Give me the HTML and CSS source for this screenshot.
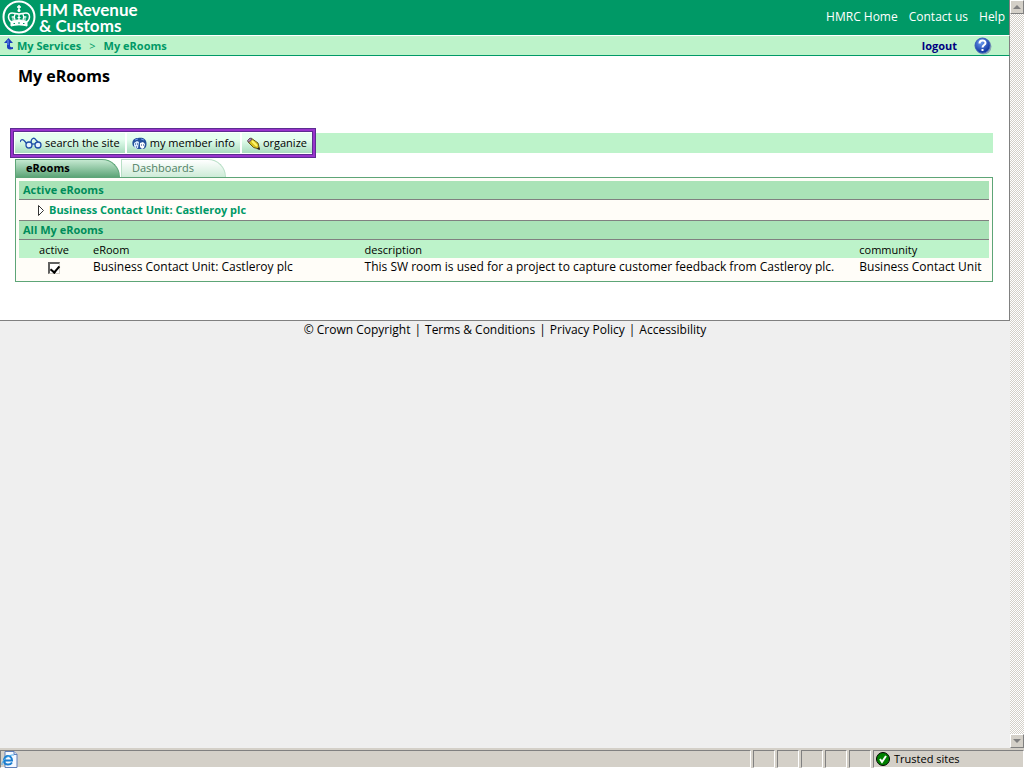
FILE: index.html
```html
<!DOCTYPE html>
<html lang="en">
<head>
    <meta charset="UTF-8">
    <meta name="viewport" content="width=device-width, initial-scale=1.0">
    <title>My eRooms</title>
    <link rel="stylesheet" href="styles.css">
</head>
<body>
    <div class="window">
        <div class="view">
            <div class="page">
                <header class="header">
                    <a class="logo" href="#">
                        <svg class="crest" width="34" height="34" viewBox="0 0 34 34" fill="none" stroke="#fff">
                            <circle cx="17" cy="17" r="15.5" stroke-width="2"/>
                            <path d="M17 5v5M15 7h4" stroke-width="1.5"/>
                            <circle cx="17" cy="10.500" r="1.500" fill="#fff" stroke="none"/>
                            <path d="M9 22c-4-4-3-9 1-9 3 0 4 1 7 1s4-1 7-1c4 0 5 5 1 9M17 14v7M13 20c-1-2-1-4 0-6M21 20c1-2 1-4 0-6" stroke-width="1.400"/>
                            <path d="M9.500 17h3M21.500 17h3M15.500 17.500h3M11 16v4M23 16v4"/>
                            <path d="M9 21.500c5-2 11-2 16 0V26c-5-1.500-11-1.500-16 0z" fill="#fff"/>
                            <path d="M11.500 23.500h1.500M16 23h2M21 23.500h1.500" stroke="#009966"/>
                        </svg>
                        <span class="logo-text">HM Revenue<br>&amp; Customs</span>
                    </a>
                    <nav class="top-links">
                        <a href="#">HMRC Home</a>
                        <a href="#">Contact us</a>
                        <a href="#">Help</a>
                    </nav>
                </header>

                <div class="crumb-bar">
                    <svg class="up-icon" width="10" height="12" viewBox="0 0 10 12">
                        <path d="M4.500 0L0 5h3v4c0 2 2 3 6 2V9C7 9.500 6 9 6 8V5h3z" fill="#1e3fbd"/>
                        <path d="M4 2v5" stroke="#6f9bf0"/>
                    </svg>
                    <a href="#">My Services</a>
                    <span class="arrow">&gt;</span>
                    <a href="#">My eRooms</a>
                    <a class="logout" href="#">logout</a>
                    <a class="help" href="#" aria-label="Help">
                        <svg width="18" height="18" viewBox="0 0 18 18">
                            <defs>
                                <radialGradient id="ball" cx="40%" cy="30%" r="70%">
                                    <stop offset="0" stop-color="#6c9cf0"/>
                                    <stop offset="1" stop-color="#0b2f9c"/>
                                </radialGradient>
                            </defs>
                            <circle cx="9.500" cy="9.500" r="8" fill="#8aa7b5"/>
                            <circle cx="8.500" cy="8.500" r="7.500" fill="url(#ball)" stroke="#3a5fb8"/>
                            <path d="M5.500 6.500c0-4 6-4 6-.5 0 2-3 2-3 4.500M8.500 12v2" fill="none" stroke="#fff" stroke-width="2"/>
                        </svg>
                    </a>
                </div>

                <main class="content">
                    <h1>My eRooms</h1>

                    <div class="toolbar">
                        <div class="tools">
                            <button class="tool" type="button">
                                <svg width="22" height="12" viewBox="0 0 22 12" fill="#e8f2ff" stroke="#1f4fa8" stroke-width="1.300">
                                    <path d="M0 5c1-3 3-3 5-.5L7 7M11 6c0-5 3-6 5-3l2 2" fill="none"/>
                                    <circle cx="9" cy="8" r="3"/>
                                    <circle cx="18" cy="8" r="3"/>
                                    <path d="M12 7h3" fill="none"/>
                                </svg>
                                search the site
                            </button>
                            <button class="tool" type="button">
                                <svg width="15" height="13" viewBox="0 0 15 13">
                                    <path d="M1 9C-1 4 2 1 6 1c6-1 10 2 8 9l-2 2H5z" fill="#24529c"/>
                                    <path d="M2 6l3-2 2 1-1 6-2 1-2-3z" fill="#d9eaff"/>
                                    <path d="M8 6l3-1 2 2-1 4-2 1-2-2z" fill="#fff"/>
                                    <path d="M3 7h1M5 7h1M9 8h1M11 8h1M4 10h1" stroke="#173a86"/>
                                    <path d="M3 3l3-1M9 2l3 1" stroke="#6f9bf0"/>
                                </svg>
                                my member info
                            </button>
                            <button class="tool" type="button">
                                <svg width="13" height="13" viewBox="0 0 13 13">
                                    <path d="M1 4l3-3 7 5 1.500 6-6-1.500L1 5z" fill="#d6c21c" stroke="#665a1c"/>
                                    <path d="M5 4l5 5" stroke="#fff56a" stroke-width="2"/>
                                    <path d="M.5 3.500L3 1l2 1-3 3.500z" fill="#a98aac" stroke="#67506b"/>
                                    <path d="M10 12l3 1-1-3z" fill="#222"/>
                                </svg>
                                organize
                            </button>
                        </div>
                    </div>

                    <div class="tabs">
                        <button class="tab active" type="button">eRooms</button>
                        <button class="tab" type="button">Dashboards</button>
                    </div>

                    <section class="panel">
                        <h2>Active eRooms</h2>
                        <div class="active-room">
                            <svg width="7" height="11" viewBox="0 0 7 11">
                                <path d="M.5 .5v10l5-5z" fill="#fff" stroke="#333"/>
                            </svg>
                            <a href="#">Business Contact Unit: Castleroy plc</a>
                        </div>
                        <h2 class="all-rooms">All My eRooms</h2>
                        <table class="rooms">
                            <thead>
                                <tr>
                                    <th class="col-active">active</th>
                                    <th class="col-room">eRoom</th>
                                    <th class="col-desc">description</th>
                                    <th>community</th>
                                </tr>
                            </thead>
                            <tbody>
                                <tr>
                                    <td class="col-active"><input class="check" type="checkbox" aria-label="active" checked></td>
                                    <td>Business Contact Unit: Castleroy plc</td>
                                    <td>This SW room is used for a project to capture customer feedback from Castleroy plc.</td>
                                    <td>Business Contact Unit</td>
                                </tr>
                            </tbody>
                        </table>
                    </section>
                </main>

                <footer class="footer">
                    <span>© Crown Copyright</span>
                    <span>|</span>
                    <a href="#">Terms &amp; Conditions</a>
                    <span>|</span>
                    <a href="#">Privacy Policy</a>
                    <span>|</span>
                    <a href="#">Accessibility</a>
                </footer>
            </div>

            <div class="scrollbar">
                <button class="scroll-button" type="button" aria-label="Scroll up">
                    <svg width="8" height="4" viewBox="0 0 8 4"><path d="M0 4l4-4 4 4z" fill="#808080"/></svg>
                </button>
                <button class="scroll-button" type="button" aria-label="Scroll down">
                    <svg width="8" height="4" viewBox="0 0 8 4"><path d="M0 0l4 4 4-4z" fill="#808080"/></svg>
                </button>
            </div>
        </div>

        <div class="status-bar">
            <div class="pane wide">
                <svg width="17" height="17" viewBox="0 0 17 17">
                    <path d="M4 .5h9l3 3v13H4z" fill="#f4f8ff" stroke="#5f7fb8"/>
                    <path d="M13 .5v3h3" fill="#cfdcf5" stroke="#5f7fb8"/>
                    <path d="M3 9.500h8c0-6-8-6-8 0 0 5 6 5 8 2" fill="none" stroke="#1c7fd0" stroke-width="2"/>
                    <path d="M1 14C0 10 8 3 13 4" fill="none" stroke="#4fb0ee"/>
                </svg>
            </div>
            <div class="pane"></div>
            <div class="pane"></div>
            <div class="pane"></div>
            <div class="pane"></div>
            <div class="pane"></div>
            <div class="pane zone">
                <svg width="14" height="14" viewBox="0 0 14 14">
                    <circle cx="7" cy="7" r="6.500" fill="#008000" stroke="#000"/>
                    <path d="M4 7l2 3 4-6" fill="none" stroke="#fff" stroke-width="2"/>
                </svg>
                Trusted sites
            </div>
        </div>
    </div>
</body>
</html>
```
FILE: styles.css
```css
* {
    box-sizing: border-box;
}
body {
    margin: 0;
    background: #efefef;
    color: #000;
    font-family: "Open Sans", "Noto Sans", sans-serif;
    font-size: 11px;
    line-height: 16px;
}
a {
    color: inherit;
    text-decoration: none;
}
button {
    font: inherit;
    color: inherit;
    border: none;
    padding: 0;
    cursor: pointer;
}
svg {
    display: block;
    flex: none;
}
.window {
    display: flex;
    flex-direction: column;
    height: 100vh;
}
.view {
    display: flex;
    flex: 1;
    min-height: 0;
}
.page {
    flex: 1;
    min-width: 0;
    overflow: hidden;
}

/* header */
.header {
    display: flex;
    justify-content: space-between;
    height: 36px;
    padding: 0 4px 0 2px;
    background: #009966;
    border-right: 1px solid #808080;
    border-bottom: 1px solid #fff;
    color: #fff;
}
.logo {
    display: flex;
    gap: 3px;
}
.logo-text {
    padding-top: 2px;
    font-family: Lato, "Open Sans", sans-serif;
    font-size: 17px;
    font-weight: 700;
    line-height: 16px;
}
.top-links {
    display: flex;
    gap: 11px;
    padding-top: 9px;
    font-size: 12px;
}
.crumb-bar {
    display: flex;
    align-items: center;
    height: 20px;
    padding: 0 17px 0 4px;
    background: #bdf3ca;
    border-right: 1px solid #808080;
    border-bottom: 1px solid #009966;
    color: #009966;
    font-weight: 700;
}
.up-icon {
    margin: 0 3px 4px 0;
}
.arrow {
    margin: 0 8px;
    font-weight: 400;
}
.logout {
    margin-left: auto;
    color: #000080;
}
.help {
    margin-left: 17px;
}

/* content */
.content {
    padding: 8px 16px 38px 15px;
    background: #fff;
    border-right: 1px solid #808080;
    border-bottom: 1px solid #808080;
}
h1 {
    margin: 0 0 45px 3px;
    font-size: 16px;
    line-height: 24px;
}
.toolbar {
    height: 20px;
    margin-bottom: 6px;
    background: #bdf3ca;
}
.tools {
    position: relative;
    display: flex;
    gap: 2px;
    width: max-content;
    height: 20px;
    background: #fff;
}
.tools::after {
    content: "";
    position: absolute;
    inset: -4px -3px -4px -4px;
    border: 2px solid #9933cc;
    outline: 1px solid #5c2d91;
    box-shadow: inset 0 0 0 1px #5c2d91;
    pointer-events: none;
}
.tool {
    display: flex;
    align-items: center;
    gap: 3px;
    padding: 0 5px;
    background: linear-gradient(#e6fff0 30%, #a9dcbf);
}
.tabs {
    display: flex;
    gap: 1px;
}
.tab {
    width: 105px;
    height: 18px;
    padding: 0 0 2px 10px;
    border: 1px solid #b8dfc6;
    border-bottom: none;
    border-radius: 0 20px 0 0;
    background: linear-gradient(#fff, #cdebd7);
    color: #4f8063;
    text-align: left;
}
.tab.active {
    border-color: #5da577;
    background: linear-gradient(#c4e8d0, #5da577);
    color: #000;
    font-weight: 700;
}
.panel {
    padding: 3px;
    border: 1px solid #5da577;
    background: #fffdf8;
}
h2 {
    margin: 0;
    padding: 1px 4px;
    background: #aae3b7;
    border-bottom: 1px solid #808080;
    color: #008c5a;
    font-size: 11px;
    line-height: 16px;
}
.all-rooms {
    border-top: 1px solid #808080;
}
.active-room {
    display: flex;
    align-items: center;
    gap: 4px;
    height: 20px;
    padding-left: 19px;
    color: #009966;
    font-weight: 700;
}
.rooms {
    width: 100%;
    border-collapse: collapse;
    table-layout: fixed;
}
.rooms th {
    padding: 2px 0 0 4px;
    background: #bdf3ca;
    font-weight: 400;
    text-align: left;
}
.rooms td {
    height: 20px;
    padding: 1px 0 3px 4px;
    font-size: 12px;
    white-space: nowrap;
}
.rooms .col-active {
    width: 70px;
    padding-left: 0;
    text-align: center;
}
.rooms .col-room {
    width: 28%;
}
.rooms .col-desc {
    width: 51%;
}
.check {
    display: block;
    position: relative;
    appearance: none;
    width: 12px;
    height: 12px;
    margin: 2px auto 0;
    border: 1px solid #d4d0c8;
    border-top: 2px solid #606060;
    border-left: 2px solid #606060;
    background: #fff;
}
.check:checked::after {
    content: "";
    position: absolute;
    left: 2px;
    top: 0;
    width: 4px;
    height: 7px;
    border: solid #000;
    border-width: 0 2px 2px 0;
    transform: rotate(40deg);
}
.footer {
    display: flex;
    justify-content: center;
    gap: 4px;
    padding: 1px 0;
    font-size: 12px;
}

/* browser window */
.scrollbar {
    display: flex;
    flex-direction: column;
    justify-content: space-between;
    width: 14px;
    background: repeating-conic-gradient(#d4d0c8 0 25%, #fff 0 50%) 0 0 / 2px 2px;
}
.scroll-button {
    display: flex;
    align-items: center;
    justify-content: center;
    width: 14px;
    height: 14px;
    background: #d4d0c8;
    border: 1px solid #fff;
    border-right-color: #808080;
    border-bottom-color: #808080;
}
.status-bar {
    display: flex;
    gap: 2px;
    height: 20px;
    padding-top: 2px;
    background: #d4d0c8;
}
.pane {
    display: flex;
    align-items: center;
    gap: 4px;
    width: 22px;
    border: 1px solid #808080;
    border-right-color: #fff;
    border-bottom-color: #fff;
}
.pane.wide {
    flex: 1;
}
.pane.zone {
    width: 151px;
    padding-left: 2px;
}
```
